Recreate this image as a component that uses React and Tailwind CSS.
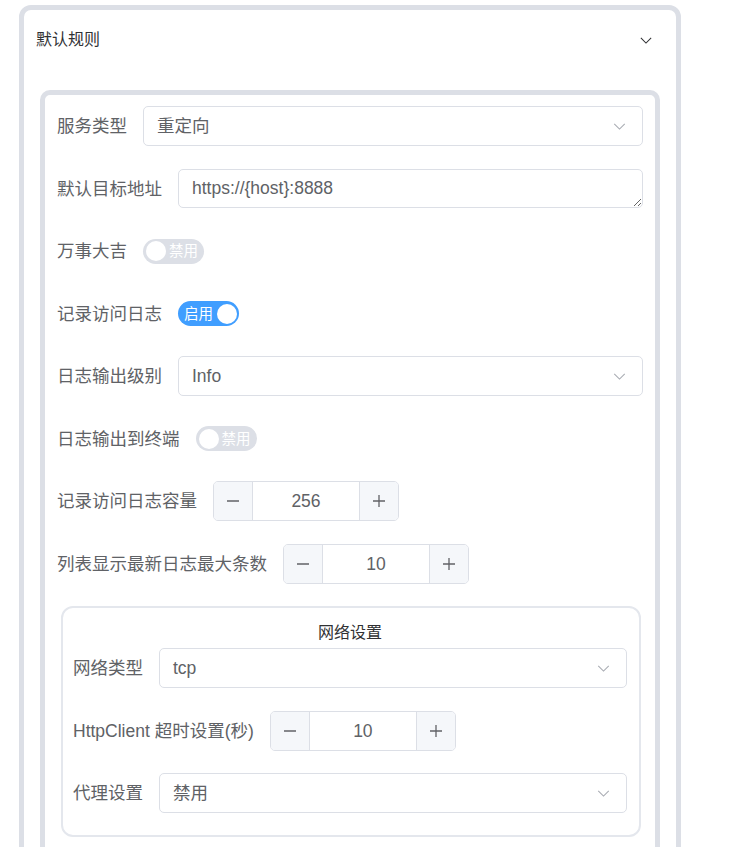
import React from 'react';

const font = { fontFamily: '"Liberation Sans", "Noto Sans CJK SC", sans-serif' };

function Arrow({ className }) {
  return (
    <svg viewBox="0 0 14 8" className={className} fill="none" stroke="currentColor" strokeWidth="1.2">
      <polyline points="1,1 7,7 13,1" />
    </svg>
  );
}

function Row({ label, children, last }) {
  return (
    <div className={`flex h-[40px] items-center ${last ? '' : 'mb-[22.5px]'}`}>
      <label className="whitespace-nowrap pr-[16px] text-[17.5px] leading-[24px] text-[#606266]">{label}</label>
      {children}
    </div>
  );
}

function Select({ value }) {
  return (
    <div className="flex h-[40px] flex-1 items-center justify-between rounded-[5px] border border-[#dcdfe6] bg-white pl-[13px] pr-[16px]">
      <span className="text-[17.5px] leading-[24px] text-[#606266]">{value}</span>
      <Arrow className="h-[7px] w-[13px] text-[#a8abb2]" />
    </div>
  );
}

function Switch({ on }) {
  if (on) {
    return (
      <div className="flex h-[25px] w-[61px] items-center gap-[4px] rounded-full bg-[#409eff] pl-[6px] pr-[2px]">
        <span className="w-[29px] text-[14.5px] leading-[20px] text-white">启用</span>
        <span className="h-[20px] w-[20px] rounded-full bg-white" />
      </div>
    );
  }
  return (
    <div className="flex h-[25px] w-[61px] items-center gap-[3px] rounded-full bg-[#dcdfe6] pl-[3px] pr-[6px]">
      <span className="h-[20px] w-[20px] rounded-full bg-white" />
      <span className="w-[29px] text-[14.5px] leading-[20px] text-white">禁用</span>
    </div>
  );
}

function NumberInput({ value }) {
  return (
    <div className="flex h-[40px] w-[186px] overflow-hidden rounded-[5px] border border-[#dcdfe6] bg-white">
      <div className="flex w-[39px] items-center justify-center border-r border-[#dcdfe6] bg-[#f5f7fa]">
        <svg viewBox="0 0 14 14" className="h-[14px] w-[14px] text-[#606266]" stroke="currentColor" strokeWidth="1.3">
          <line x1="1" y1="7" x2="13" y2="7" />
        </svg>
      </div>
      <div className="flex flex-1 items-center justify-center text-[17.5px] leading-[24px] text-[#606266]">{value}</div>
      <div className="flex w-[39px] items-center justify-center border-l border-[#dcdfe6] bg-[#f5f7fa]">
        <svg viewBox="0 0 14 14" className="h-[14px] w-[14px] text-[#606266]" stroke="currentColor" strokeWidth="1.3">
          <line x1="1" y1="7" x2="13" y2="7" />
          <line x1="7" y1="1" x2="7" y2="13" />
        </svg>
      </div>
    </div>
  );
}

export default function App() {
  return (
    <div className="h-[847px] overflow-hidden bg-white pl-[19px] pt-[5px]" style={font}>
      <div className="w-[662px] rounded-[12px] border-[5px] border-[#dcdfe6] pb-[40px]">
        <div className="flex h-[60px] items-center justify-between pl-[12px] pr-[24px]">
          <span className="text-[16px] leading-[20px] text-[#303133]">默认规则</span>
          <Arrow className="h-[7px] w-[12px] text-[#303133]" />
        </div>

        <div className="px-[16px] pt-[20px]">
          <div className="rounded-[10px] border-[5px] border-[#dcdfe6] px-[12px] pb-[30px] pt-[11px]">
            <Row label="服务类型">
              <Select value="重定向" />
            </Row>
            <Row label="默认目标地址">
              <textarea
                readOnly
                rows={1}
                value="https://{host}:8888"
                className="h-[39px] flex-1 resize-y rounded-[5px] border border-[#dcdfe6] px-[13px] py-[6px] text-[17.5px] leading-[25px] text-[#606266] outline-none"
              />
            </Row>
            <Row label="万事大吉">
              <Switch />
            </Row>
            <Row label="记录访问日志">
              <Switch on />
            </Row>
            <Row label="日志输出级别">
              <Select value="Info" />
            </Row>
            <Row label="日志输出到终端">
              <Switch />
            </Row>
            <Row label="记录访问日志容量">
              <NumberInput value="256" />
            </Row>
            <Row label="列表显示最新日志最大条数">
              <NumberInput value="10" />
            </Row>

            <div className="ml-[4px] w-[580px] rounded-[12px] border-2 border-[#e4e7ed] pb-[22px] pl-[10px] pr-[12px] pt-[15px]">
              <div className="mb-[5px] text-center text-[16px] leading-[20px] text-[#303133]">网络设置</div>
              <div className="flex flex-col gap-[22.5px]">
                <Row label="网络类型" last>
                  <Select value="tcp" />
                </Row>
                <Row label="HttpClient 超时设置(秒)" last>
                  <NumberInput value="10" />
                </Row>
                <Row label="代理设置" last>
                  <Select value="禁用" />
                </Row>
              </div>
            </div>
          </div>
        </div>
      </div>
    </div>
  );
}
